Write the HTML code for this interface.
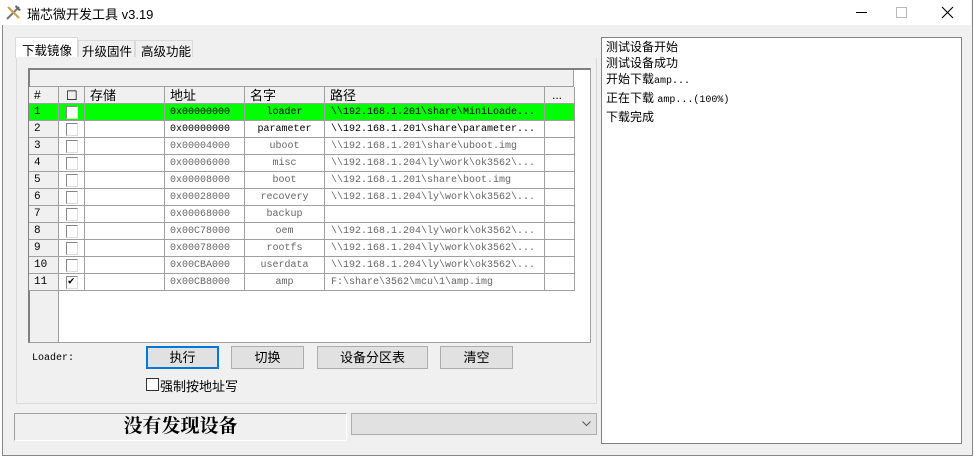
<!DOCTYPE html>
<html><head><meta charset="utf-8"><style>
*{margin:0;padding:0;box-sizing:border-box}
body{width:974px;height:458px;background:#fff;position:relative;overflow:hidden;font-family:"Liberation Sans","Noto Sans CJK SC",sans-serif;font-size:12px;color:#000}
.a{position:absolute}
.win{left:2px;top:0;width:971px;height:456px;border:1px solid #888;border-top:none;background:#f0f0f0}
.title{left:0;top:0;width:971px;height:25px;background:#fff}
.mono{font-family:"Liberation Mono","Noto Sans CJK SC",monospace;font-size:10px}
.row{position:absolute;left:29px;height:17px;width:546px}
.c{position:absolute;top:0;height:17px;border-right:1px solid #a0a0a0;border-bottom:1px solid #a0a0a0;line-height:17px;white-space:nowrap;overflow:hidden}
.btn{position:absolute;top:346px;height:23px;background:#e1e1e1;border:1px solid #adadad;text-align:center;line-height:21px;font-size:13px}
.cb{position:absolute;left:37px;top:2px;width:12px;height:13px;border:1px solid #888;background:#fff;border-right-color:#ddd;border-bottom-color:#ddd}
</style></head><body>
<div class="a win"></div>
<div class="a title"></div>
<svg class="a" style="left:5px;top:4px" width="17" height="17" viewBox="0 0 17 17"><path d="M2 15L14 3" stroke="#777" stroke-width="2"/><path d="M3 3L14 14" stroke="#c9a24a" stroke-width="2"/><path d="M11 1l5 5-2 1-4-4z" fill="#666"/></svg>
<div class="a" style="left:27px;top:4px;font-size:13px">瑞芯微开发工具 v3.19</div>
<div class="a" style="left:856px;top:12px;width:11px;height:1px;background:#000"></div>
<div class="a" style="left:896px;top:7px;width:11px;height:11px;border:1px solid #bbb"></div>
<svg class="a" style="left:941px;top:6px" width="13" height="13"><path d="M1 1L12 12M12 1L1 12" stroke="#000" stroke-width="1.1"/></svg>

<div class="a" style="left:16px;top:57px;width:581px;height:347px;background:#f0f0f0;border:1px solid #d9d9d9;border-top-color:#fff"></div>
<div class="a" style="left:15px;top:37px;width:63px;height:21px;background:#fff;border:1px solid #d9d9d9;border-bottom:none;padding:2px 0 0 6px;font-size:12.5px">下载镜像</div>
<div class="a" style="left:78px;top:40px;width:57px;height:18px;background:#f0f0f0;border:1px solid #d9d9d9;border-bottom:none;padding:0 0 0 3px;font-size:12.5px;white-space:nowrap">升级固件</div>
<div class="a" style="left:135px;top:40px;width:58px;height:18px;background:#f0f0f0;border:1px solid #d9d9d9;border-bottom:none;padding:0 0 0 5px;font-size:12.5px;white-space:nowrap">高级功能</div>
<div class="a" style="left:17px;top:57px;width:579px;height:346px;background:#f0f0f0"></div>

<div class="a" style="left:28px;top:68px;width:563px;height:275px;background:#fff;border:1px solid #a0a0a0;border-left:2px solid #808080;border-top:2px solid #808080"></div>
<div class="a" style="left:30px;top:70px;width:544px;height:17px;background:#f0f0f0;border-bottom:1px solid #a0a0a0;border-right:1px solid #a0a0a0"></div>
<div class="a" style="left:30px;top:87px;width:29px;height:255px;background:#f0f0f0;border-right:1px solid #a0a0a0"></div>
<div class="row" style="top:87px;background:#f0f0f0">
<div class="c" style="left:0;width:30px;padding-left:5px">#</div>
<div class="c" style="left:30px;width:26px;padding-left:7px;font-size:13px">☐</div>
<div class="c" style="left:56px;width:80px;padding-left:5px;font-size:13px">存储</div>
<div class="c" style="left:136px;width:80px;padding-left:5px;font-size:13px">地址</div>
<div class="c" style="left:216px;width:80px;padding-left:5px;font-size:13px">名字</div>
<div class="c" style="left:296px;width:220px;padding-left:5px;font-size:13px">路径</div>
<div class="c" style="left:516px;width:30px;padding-left:7px">...</div>
</div>
<div id="rows"></div>
<script>
var d=[["0x00000000","loader","\\\\192.168.1.201\\share\\MiniLoade..."],["0x00000000","parameter","\\\\192.168.1.201\\share\\parameter..."],["0x00004000","uboot","\\\\192.168.1.201\\share\\uboot.img"],["0x00006000","misc","\\\\192.168.1.204\\ly\\work\\ok3562\\..."],["0x00008000","boot","\\\\192.168.1.201\\share\\boot.img"],["0x00028000","recovery","\\\\192.168.1.204\\ly\\work\\ok3562\\..."],["0x00068000","backup",""],["0x00C78000","oem","\\\\192.168.1.204\\ly\\work\\ok3562\\..."],["0x00078000","rootfs","\\\\192.168.1.204\\ly\\work\\ok3562\\..."],["0x00CBA000","userdata","\\\\192.168.1.204\\ly\\work\\ok3562\\..."],["0x00CB8000","amp","F:\\share\\3562\\mcu\\1\\amp.img"]];
var h="";d.forEach(function(r,i){var g=i==0?"#00ff00":"#fff",col=i<2?"#000":"#666";
h+='<div class="row mono" style="top:'+(104+i*17)+'px;color:'+col+'">'+
'<div class="c" style="left:0;width:30px;padding-left:5px;font-size:11px;background:'+(i==0?g:"#f0f0f0")+';color:#000">'+(i+1)+'</div>'+
'<div class="c" style="left:30px;width:26px;background:'+g+'"><div class="cb" style="left:7px">'+(i==10?'<span style="position:absolute;left:1px;top:-3px;font-size:11px;color:#000">✔</span>':'')+'</div></div>'+
'<div class="c" style="left:56px;width:80px;background:'+g+'"></div>'+
'<div class="c" style="left:136px;width:80px;padding-left:5px;background:'+g+'">'+r[0]+'</div>'+
'<div class="c" style="left:216px;width:80px;text-align:center;background:'+g+'">'+r[1]+'</div>'+
'<div class="c" style="left:296px;width:220px;padding-left:6px;background:'+g+'">'+r[2]+'</div>'+
'<div class="c" style="left:516px;width:30px;background:'+g+'"></div></div>';});
document.getElementById("rows").innerHTML=h;
</script>

<div class="a mono" style="left:32px;top:353px">Loader:</div>
<div class="btn" style="left:146px;width:73px;border:2px solid #0078d7;line-height:19px">执行</div>
<div class="btn" style="left:231px;width:73px">切换</div>
<div class="btn" style="left:317px;width:111px">设备分区表</div>
<div class="btn" style="left:440px;width:73px">清空</div>
<div class="a" style="left:146px;top:378px;width:13px;height:13px;border:1px solid #333;background:#fff"></div>
<div class="a" style="left:160px;top:376px;font-size:13px">强制按地址写</div>

<div class="a" style="left:14px;top:413px;width:333px;height:28px;border:1px solid #a0a0a0;border-right-color:#fff;border-bottom-color:#fff;text-align:center;font-family:'Liberation Serif','Noto Serif CJK SC',serif;font-weight:bold;font-size:19px;line-height:26px">没有发现设备</div>
<div class="a" style="left:351px;top:413px;width:246px;height:22px;background:#e1e1e1;border:1px solid #adadad"></div>
<svg class="a" style="left:582px;top:421px" width="9" height="6"><path d="M0.5 0.5L4.5 4.5L8.5 0.5" stroke="#555" fill="none"/></svg>

<div class="a" style="left:601px;top:37px;width:361px;height:407px;background:#fff;border:1px solid #828282;padding:1px 0 0 4px;font-size:12px;line-height:16px">测试设备开始<br>测试设备成功<br>开始下载<span class="mono">amp...</span><br>正在下载 <span class="mono">amp...(100%)</span><br>下载完成</div>
</body></html>
